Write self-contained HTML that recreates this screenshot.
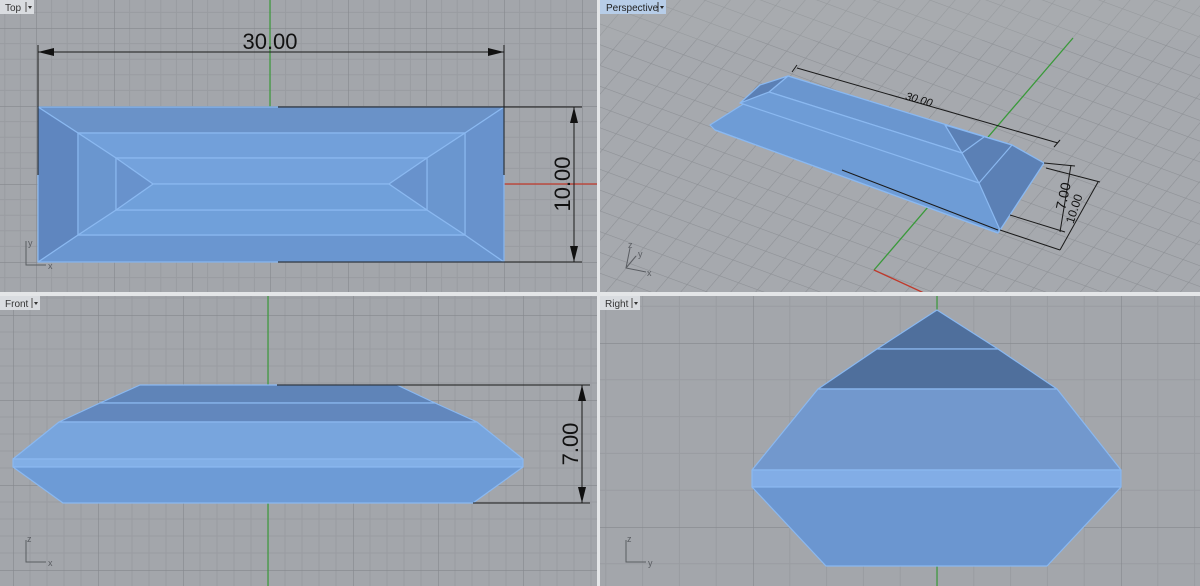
<!DOCTYPE html>
<html><head><meta charset="utf-8"><style>
html,body{margin:0;padding:0;background:#e4e6e8;}
svg{display:block;font-family:"Liberation Sans",sans-serif;}
</style></head><body>
<svg width="1200" height="586" viewBox="0 0 1200 586" xmlns="http://www.w3.org/2000/svg">
<defs>
<pattern id="gTop" patternUnits="userSpaceOnUse" x="36" y="28" width="78" height="78">
<rect width="78" height="78" fill="#a3a6ab"/>
<path d="M15.6 0V78M31.2 0V78M46.8 0V78M62.4 0V78M0 15.6H78M0 31.2H78M0 46.8H78M0 62.4H78" stroke="#999ca1" stroke-width="1"/>
<path d="M0 0V78M0 0H78" stroke="#85888d" stroke-width="1.2"/>
</pattern>
<pattern id="gFront" patternUnits="userSpaceOnUse" x="13" y="60" width="85" height="85">
<rect width="85" height="85" fill="#a3a6ab"/>
<path d="M17 0V85M34 0V85M51 0V85M68 0V85M0 17H85M0 34H85M0 51H85M0 68H85" stroke="#999ca1" stroke-width="1"/>
<path d="M0 0V85M0 0H85" stroke="#85888d" stroke-width="1.2"/>
</pattern>
<pattern id="gRight" patternUnits="userSpaceOnUse" x="17" y="159" width="184" height="184">
<rect width="184" height="184" fill="#a3a6ab"/>
<path d="M36.8 0V184M73.6 0V184M110.4 0V184M147.2 0V184M0 36.8H184M0 73.6H184M0 110.4H184M0 147.2H184" stroke="#999ca1" stroke-width="1"/>
<path d="M0 0V184M0 0H184" stroke="#85888d" stroke-width="1.2"/>
</pattern>
<pattern id="gPer" patternUnits="userSpaceOnUse" width="1" height="1" patternTransform="matrix(19 7 -13.5 15.8 874 270)">
<rect width="1" height="1" fill="#a6a9ae"/>
<path d="M0 0V1M0 0H1" stroke="#8d9095" stroke-width="0.06"/>
</pattern>
<clipPath id="c1"><rect x="0" y="0" width="597" height="292"/></clipPath>
<clipPath id="c2"><rect x="600" y="0" width="600" height="292"/></clipPath>
<clipPath id="c3"><rect x="0" y="296" width="597" height="290"/></clipPath>
<clipPath id="c4"><rect x="600" y="296" width="600" height="290"/></clipPath>
</defs>

<!-- TOP VIEW -->
<g clip-path="url(#c1)">
<rect x="0" y="0" width="597" height="292" fill="url(#gTop)"/>
<line x1="270" y1="0" x2="270" y2="107" stroke="#3a9a3a" stroke-width="1.2"/>
<line x1="504" y1="184" x2="597" y2="184" stroke="#c0392b" stroke-width="1.2"/>
<g stroke="#8ab8f0" stroke-width="1.2" stroke-linejoin="round">
<polygon points="38,107 504,107 465,133 78,133" fill="#6a92c8"/>
<polygon points="38,262 504,262 465,235 78,235" fill="#6a96d0"/>
<polygon points="38,107 78,133 78,235 38,262" fill="#5f86bf"/>
<polygon points="504,107 465,133 465,235 504,262" fill="#6892cc"/>
<polygon points="78,133 465,133 427,158 116,158" fill="#72a0da"/>
<polygon points="78,235 465,235 427,210 116,210" fill="#70a0da"/>
<polygon points="78,133 116,158 116,210 78,235" fill="#6a96cf"/>
<polygon points="465,133 427,158 427,210 465,235" fill="#6a96cf"/>
<polygon points="116,158 427,158 389,184 153,184" fill="#74a2dc"/>
<polygon points="116,210 427,210 389,184 153,184" fill="#70a0da"/>
<polygon points="116,158 153,184 116,210" fill="#6892cc"/>
<polygon points="427,158 389,184 427,210" fill="#6892cc"/>
</g>
<g stroke="#1a1a1a" stroke-width="1" fill="none">
<line x1="278" y1="107" x2="582" y2="107"/>
<line x1="278" y1="262" x2="582" y2="262"/>
<line x1="38" y1="45" x2="38" y2="175"/>
<line x1="504" y1="45" x2="504" y2="175"/>
<line x1="38" y1="52" x2="504" y2="52"/>
<line x1="574" y1="107" x2="574" y2="262"/>
</g>
<g fill="#111">
<polygon points="38,52 54,48 54,56"/><polygon points="504,52 488,48 488,56"/>
<polygon points="574,107 570,123 578,123"/><polygon points="574,262 570,246 578,246"/>
</g>
<text x="270" y="49" font-size="22" text-anchor="middle" fill="#111">30.00</text>
<text transform="translate(570,184) rotate(-90)" font-size="22" text-anchor="middle" fill="#111">10.00</text>
<g stroke="#5a5d62" stroke-width="1" fill="none"><path d="M26 241V265H46"/></g>
<text x="28" y="246" font-size="9" fill="#5a5d62">y</text>
<text x="48" y="269" font-size="9" fill="#5a5d62">x</text>
<rect x="0" y="0" width="34" height="14" fill="#d9dce0"/>
<text x="5" y="11" font-size="10" fill="#333">Top</text>
<line x1="26" y1="2" x2="26" y2="12" stroke="#555"/>
<polygon points="28,6 32,6 30,9" fill="#333"/>
</g>

<!-- PERSPECTIVE -->
<g clip-path="url(#c2)">
<rect x="600" y="0" width="600" height="292" fill="url(#gPer)"/>
<rect x="600" y="0" width="600" height="40" fill="#b0b2b5" opacity="0.25"/>
<line x1="1073" y1="38" x2="874" y2="270" stroke="#3a9a3a" stroke-width="1.3"/>
<line x1="874" y1="270" x2="924" y2="293" stroke="#c0392b" stroke-width="1.3"/>
<g stroke="#8ab8f0" stroke-width="1.2" stroke-linejoin="round">
<polygon points="710,125 788,76 1012,145 1044,163 1000,230 998,233 715,130" fill="#6e9cd6"/>
<polygon points="788,76 1012,145 945,125 962,153 769,92" fill="#6a96cf"/>
<polygon points="769,92 962,153 979,183 740,103" fill="#6e9cd6"/>
<polygon points="945,125 1012,145 1044,163 1000,230 979,183 962,153" fill="#5b80b5"/>
<line x1="979" y1="183" x2="1012" y2="145"/>
<line x1="962" y1="153" x2="984" y2="137"/>
<polygon points="788,76 769,92 740,103 760,85" fill="#5b80b5"/>
<line x1="715" y1="130" x2="998" y2="233"/>
</g>
<g stroke="#1a1a1a" stroke-width="1" fill="none">
<line x1="797" y1="68" x2="1058" y2="143"/>
<line x1="792" y1="72" x2="797" y2="65"/>
<line x1="1054" y1="147" x2="1060" y2="140"/>
<line x1="1044" y1="163" x2="1075" y2="166"/>
<line x1="1046" y1="168" x2="1100" y2="182"/>
<line x1="1000" y1="230" x2="1060" y2="250"/>
<line x1="1010" y1="215" x2="1065" y2="232"/>
<line x1="1071" y1="165" x2="1060" y2="232"/>
<line x1="1098" y1="182" x2="1060" y2="250"/>
<line x1="842" y1="170" x2="998" y2="230"/>
</g>
<text transform="translate(918,103) rotate(16)" font-size="11" text-anchor="middle" fill="#111" font-style="italic">30.00</text>
<text transform="translate(1068,197) rotate(-78)" font-size="14" text-anchor="middle" fill="#111">7.00</text>
<text transform="translate(1078,210) rotate(-72)" font-size="12" text-anchor="middle" fill="#111">10.00</text>
<g stroke="#5a5d62" stroke-width="1" fill="none"><path d="M630 248L626 268L646 272"/><path d="M626 268L636 256"/></g>
<text x="628" y="248" font-size="9" fill="#5a5d62">z</text>
<text x="638" y="257" font-size="9" fill="#5a5d62">y</text>
<text x="647" y="276" font-size="9" fill="#5a5d62">x</text>
<rect x="600" y="0" width="66" height="14" fill="#b7cde8"/>
<text x="606" y="11" font-size="10" fill="#222">Perspective</text>
<line x1="658" y1="2" x2="658" y2="12" stroke="#333"/>
<polygon points="660,6 664,6 662,9" fill="#222"/>
</g>

<!-- FRONT -->
<g clip-path="url(#c3)">
<rect x="0" y="296" width="597" height="290" fill="url(#gFront)"/>
<line x1="268" y1="296" x2="268" y2="586" stroke="#3a9a3a" stroke-width="1.2"/>
<g stroke="#8ab8f0" stroke-width="1.2" stroke-linejoin="round">
<polygon points="140,385 397,385 435,403 100,403" fill="#5f84b8"/>
<polygon points="100,403 435,403 477,422 59,422" fill="#6287bd"/>
<polygon points="59,422 477,422 523,459 13,459" fill="#78a5dd"/>
<polygon points="13,459 523,459 523,467 13,467" fill="#82afe6"/>
<polygon points="13,467 523,467 473,503 63,503" fill="#6d9bd6"/>
</g>
<g stroke="#1a1a1a" stroke-width="1" fill="none">
<line x1="277" y1="385" x2="590" y2="385"/>
<line x1="473" y1="503" x2="590" y2="503"/>
<line x1="582" y1="385" x2="582" y2="503"/>
</g>
<g fill="#111"><polygon points="582,385 578,401 586,401"/><polygon points="582,503 578,487 586,487"/></g>
<text transform="translate(578,444) rotate(-90)" font-size="22" text-anchor="middle" fill="#111">7.00</text>
<g stroke="#5a5d62" stroke-width="1" fill="none"><path d="M26 540V562H46"/></g>
<text x="27" y="542" font-size="9" fill="#5a5d62">z</text>
<text x="48" y="566" font-size="9" fill="#5a5d62">x</text>
<rect x="0" y="296" width="40" height="14" fill="#d9dce0"/>
<text x="5" y="307" font-size="10" fill="#333">Front</text>
<line x1="32" y1="298" x2="32" y2="308" stroke="#555"/>
<polygon points="34,302 38,302 36,305" fill="#333"/>
</g>

<!-- RIGHT -->
<g clip-path="url(#c4)">
<rect x="600" y="296" width="600" height="290" fill="url(#gRight)"/>
<line x1="937" y1="296" x2="937" y2="586" stroke="#3a9a3a" stroke-width="1.2"/>
<g stroke="#8ab8f0" stroke-width="1.2" stroke-linejoin="round">
<polygon points="937,310 998,349 877,349" fill="#4f6f9c"/>
<polygon points="877,349 998,349 1057,389 818,389" fill="#4f6f9c"/>
<polygon points="818,389 1057,389 1121,470 752,470" fill="#7298cd"/>
<polygon points="752,470 1121,470 1121,487 752,487" fill="#82ade6"/>
<polygon points="752,487 1121,487 1047,566 826,566" fill="#6b96d0"/>
</g>
<g stroke="#5a5d62" stroke-width="1" fill="none"><path d="M626 540V562H646"/></g>
<text x="627" y="542" font-size="9" fill="#5a5d62">z</text>
<text x="648" y="566" font-size="9" fill="#5a5d62">y</text>
<rect x="600" y="296" width="40" height="14" fill="#d9dce0"/>
<text x="605" y="307" font-size="10" fill="#333">Right</text>
<line x1="632" y1="298" x2="632" y2="308" stroke="#555"/>
<polygon points="634,302 638,302 636,305" fill="#333"/>
</g>
<rect x="597" y="0" width="3" height="586" fill="#e4e6e8"/>
<rect x="0" y="292" width="1200" height="4" fill="#e4e6e8"/>
</svg>
</body></html>
